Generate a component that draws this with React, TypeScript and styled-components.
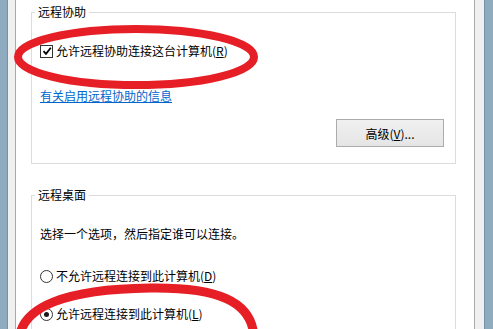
import React from "react";
import styled, { createGlobalStyle } from "styled-components";

const Global = createGlobalStyle`
  html, body { margin: 0; padding: 0; background: #ffffff; }
  body { font-family: "Noto Sans CJK SC", "Microsoft YaHei", sans-serif; font-size: 12px; color: #000; }
`;

const Window = styled.div`
  position: relative;
  width: 493px;
  height: 329px;
  display: flex;
  overflow: hidden;
  background: #ffffff;
`;

const Frame = styled.div<{ $side: "left" | "right" }>`
  display: flex;
  flex-direction: ${(p) => (p.$side === "left" ? "row" : "row-reverse")};
  flex: none;
`;

const FrameBlue = styled.div<{ $w: number; $side: "left" | "right" }>`
  width: ${(p) => p.$w}px;
  background: #8eabbf;
  ${(p) => (p.$side === "left" ? "border-right" : "border-left")}: 1px solid #7591a5;
`;

const FrameGrey = styled.div<{ $w: number; $side: "left" | "right" }>`
  width: ${(p) => p.$w}px;
  background: #f0f0f0;
  ${(p) => (p.$side === "left" ? "border-right" : "border-left")}: 1px solid #a9a9a9;
`;

const Content = styled.div`
  flex: 1;
  display: flex;
  flex-direction: column;
  padding: 0 18px 0 15px;
`;

const Group = styled.fieldset<{ $top: number; $bottom: number }>`
  margin: ${(p) => p.$top}px 0 0 0;
  padding: 0 0 ${(p) => p.$bottom}px 8px;
  border: 1px solid #dcdcdc;
  display: flex;
  flex-direction: column;
  align-items: flex-start;
  min-width: 0;
`;

const Legend = styled.legend`
  margin-left: -5px;
  padding: 0 3px;
  line-height: 16px;
  color: #000;
`;

const Row = styled.div<{ $mt: number }>`
  margin-top: ${(p) => p.$mt}px;
  display: flex;
  align-items: center;
  height: 16px;
  line-height: 16px;
  white-space: nowrap;
`;

const Box = styled.span`
  width: 11px;
  height: 11px;
  border: 1px solid #333333;
  background: #fff;
  margin-right: 3px;
  display: flex;
  align-items: center;
  justify-content: center;
  flex: none;
`;

const Radio = styled.span<{ $on?: boolean }>`
  width: 11px;
  height: 11px;
  border: 1px solid #333333;
  border-radius: 50%;
  background: #fff;
  margin-right: 3px;
  display: flex;
  align-items: center;
  justify-content: center;
  flex: none;
  &::after {
    content: "";
    width: 5px;
    height: 5px;
    border-radius: 50%;
    background: ${(p) => (p.$on ? "#1a1a1a" : "transparent")};
  }
`;

const Key = styled.span`
  text-decoration: underline;
`;

const Link = styled.a`
  color: #0066cc;
  text-decoration: underline;
  cursor: pointer;
`;

const ButtonRow = styled.div`
  align-self: stretch;
  display: flex;
  justify-content: flex-end;
  padding-right: 11px;
  margin-top: 15px;
`;

const Button = styled.button`
  width: 108px;
  height: 28px;
  border: 1px solid #acacac;
  background: linear-gradient(#f0f0f0, #e5e5e5);
  font-family: inherit;
  font-size: 12px;
  color: #000;
  padding: 0;
`;

const Overlay = styled.svg`
  position: absolute;
  left: 0;
  top: 0;
  pointer-events: none;
`;

export default function App() {
  return (
    <>
      <Global />
      <Window>
        <Frame $side="left">
          <FrameBlue $w={7} $side="left" />
          <FrameGrey $w={7} $side="left" />
        </Frame>
        <Content>
          <Group $top={4} $bottom={16}>
            <Legend>远程协助</Legend>
            <Row $mt={23}>
              <Box>
                <svg width="10" height="10" viewBox="0 0 10 10">
                  <path d="M1.5 5.2 L4 7.8 L8.8 1.8" fill="none" stroke="#000" strokeWidth="1.8" />
                </svg>
              </Box>
              允许远程协助连接这台计算机(<Key>R</Key>)
            </Row>
            <Row $mt={29}>
              <Link>有关启用远程协助的信息</Link>
            </Row>
            <ButtonRow>
              <Button>
                高级(<Key>V</Key>)...
              </Button>
            </ButtonRow>
          </Group>
          <Group $top={23} $bottom={20}>
            <Legend>远程桌面</Legend>
            <Row $mt={23}>选择一个选项，然后指定谁可以连接。</Row>
            <Row $mt={26}>
              <Radio />
              不允许远程连接到此计算机(<Key>D</Key>)
            </Row>
            <Row $mt={22}>
              <Radio $on />
              允许远程连接到此计算机(<Key>L</Key>)
            </Row>
          </Group>
        </Content>
        <Frame $side="right">
          <FrameBlue $w={8} $side="right" />
          <FrameGrey $w={9} $side="right" />
        </Frame>
        <Overlay width="493" height="329" viewBox="0 0 493 329">
          <ellipse cx="136" cy="57" rx="118" ry="28" fill="none" stroke="#e61e25" strokeWidth="8" />
          <path
            d="M 19 345 C 17 305, 70 289, 150 288 C 215 287, 254 300, 254 340"
            fill="none"
            stroke="#e61e25"
            strokeWidth="9"
          />
        </Overlay>
      </Window>
    </>
  );
}
